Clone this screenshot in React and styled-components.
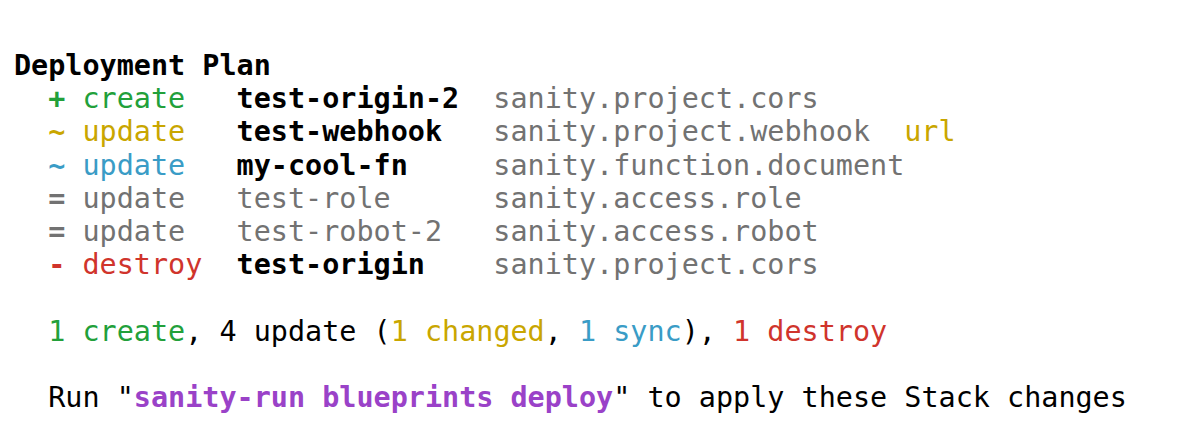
import React from 'react'
import styled, { createGlobalStyle } from 'styled-components'

const GlobalStyle = createGlobalStyle`
  body {
    margin: 0;
    background: #fff;
  }
`

const colors = {
  green: '#22a03a',
  yellow: '#c9a600',
  blue: '#3a9cc6',
  gray: '#727272',
  red: '#d0342c',
  purple: '#9a42c8',
  black: '#000'
}

const Terminal = styled.div`
  font-family: "DejaVu Sans Mono", "Liberation Mono", monospace;
  font-size: 28.45px;
  line-height: 33.2px;
  color: #000;
  padding: 49px 0 0 14px;
  white-space: pre;
`
const Title = styled.div`
  font-weight: 700;
`
const Row = styled.div`
  display: flex;
  padding-left: 2ch;
`
const Cell = styled.span`
  width: ${p => p.$w ? `${p.$w}ch` : 'auto'};
  flex-shrink: 0;
  color: ${p => colors[p.$color] || '#000'};
  font-weight: ${p => p.$bold ? 700 : 400};
`
const Sign = styled.b`
  font-weight: 700;
`
const Line = styled.div`
  padding-left: 2ch;
  margin-top: ${p => p.$gap ? '33.2px' : 0};
`
const Tint = styled.span`
  color: ${p => colors[p.$color]};
  font-weight: ${p => p.$bold ? 700 : 400};
`

const plan = [
  { sign: '+', action: 'create', color: 'green', name: 'test-origin-2', bold: true, type: 'sanity.project.cors' },
  { sign: '~', action: 'update', color: 'yellow', name: 'test-webhook', bold: true, type: 'sanity.project.webhook', change: 'url' },
  { sign: '~', action: 'update', color: 'blue', name: 'my-cool-fn', bold: true, type: 'sanity.function.document' },
  { sign: '=', action: 'update', color: 'gray', name: 'test-role', type: 'sanity.access.role' },
  { sign: '=', action: 'update', color: 'gray', name: 'test-robot-2', type: 'sanity.access.robot' },
  { sign: '-', action: 'destroy', color: 'red', name: 'test-origin', bold: true, type: 'sanity.project.cors' }
]

function App() {
  return (
    <>
      <GlobalStyle />
      <Terminal>
        <Title>Deployment Plan</Title>
        {plan.map((r, i) => (
          <Row key={i}>
            <Cell $w={11} $color={r.color}><Sign>{r.sign}</Sign> {r.action}</Cell>
            <Cell $w={15} $bold={r.bold} $color={r.bold ? 'black' : 'gray'}>{r.name}</Cell>
            <Cell $w={r.change ? 24 : 0} $color="gray">{r.type}</Cell>
            {r.change && <Cell $color="yellow">{r.change}</Cell>}
          </Row>
        ))}
        <Line $gap>
          <Tint $color="green">1 create</Tint>, 4 update (<Tint $color="yellow">1 changed</Tint>, <Tint $color="blue">1 sync</Tint>), <Tint $color="red">1 destroy</Tint>
        </Line>
        <Line $gap>
          Run "<Tint $color="purple" $bold>sanity-run blueprints deploy</Tint>" to apply these Stack changes
        </Line>
      </Terminal>
    </>
  )
}

export default App
